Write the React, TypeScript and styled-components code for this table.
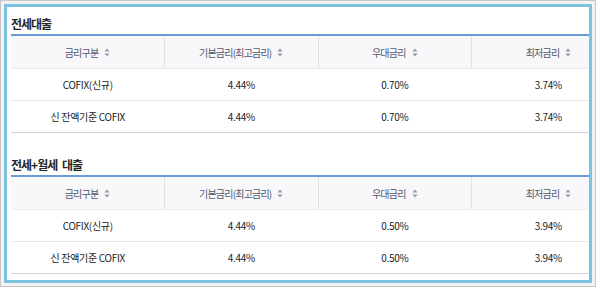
import styled, { createGlobalStyle } from "styled-components";

const GlobalStyle = createGlobalStyle`
  html, body {
    margin: 0;
    padding: 0;
    background: #fff;
  }
  body {
    font-family: "Noto Sans CJK KR", "Noto Sans", sans-serif;
  }
`;

interface RateRow {
  name: string;
  base: string;
  pref: string;
  min: string;
}

interface Section {
  title: string;
  rows: RateRow[];
}

const sections: Section[] = [
  {
    title: "전세대출",
    rows: [
      { name: "COFIX(신규)", base: "4.44%", pref: "0.70%", min: "3.74%" },
      { name: "신 잔액기준 COFIX", base: "4.44%", pref: "0.70%", min: "3.74%" },
    ],
  },
  {
    title: "전세+월세 대출",
    rows: [
      { name: "COFIX(신규)", base: "4.44%", pref: "0.50%", min: "3.94%" },
      { name: "신 잔액기준 COFIX", base: "4.44%", pref: "0.50%", min: "3.94%" },
    ],
  },
];

const headers = ["금리구분", "기본금리(최고금리)", "우대금리", "최저금리"];

const Frame = styled.div`
  box-sizing: border-box;
  width: 596px;
  height: 287px;
  border: 1px solid #c6c6c6;
  background: #f3f3f3;
  padding: 3px;
`;

const Panel = styled.div`
  box-sizing: border-box;
  height: 100%;
  border: 3px solid #7dc3e1;
  background: #fff;
  overflow: hidden;
  padding: 7px 0 0 4px;
`;

const Block = styled.section<{ $first?: boolean }>`
  margin-top: ${(p) => (p.$first ? "0" : "22px")};
`;

const Title = styled.h3`
  margin: 0;
  font-size: 12px;
  line-height: 20px;
  font-weight: 700;
  color: #262626;
  letter-spacing: -1px;
  word-spacing: 3px;
`;

const Table = styled.table`
  width: 614px;
  table-layout: fixed;
  border-collapse: collapse;
  border-top: 2px solid #6b9bd6;
`;

const HeadCell = styled.th`
  height: 32px;
  padding: 0;
  background: #f8f8fa;
  border-bottom: 1px solid #ececec;
  border-left: 1px solid #e2e2e6;
  font-size: 10px;
  font-weight: 400;
  color: #52576f;
  letter-spacing: -0.8px;
  text-align: center;

  &:first-child {
    border-left: none;
  }
`;

const Cell = styled.td<{ $last?: boolean }>`
  height: 31px;
  padding: 0;
  border-bottom: 1px solid ${(p) => (p.$last ? "#d2d2da" : "#e8e8e8")};
  font-size: 10px;
  letter-spacing: -0.3px;
  color: #222;
  text-align: center;
`;

const HeadLabel = styled.span`
  display: inline-flex;
  align-items: center;
  gap: 6px;
`;

const SortIcon = () => (
  <svg width="6" height="9" viewBox="0 0 6 9" aria-hidden="true">
    <path d="M3 0.5 L5.6 3.6 L0.4 3.6 Z" fill="#9a9ca8" />
    <path d="M3 8.5 L5.6 5.4 L0.4 5.4 Z" fill="#9a9ca8" />
  </svg>
);

function RateTable({ section, first }: { section: Section; first?: boolean }) {
  return (
    <Block $first={first}>
      <Title>{section.title}</Title>
      <Table>
        <thead>
          <tr>
            {headers.map((h) => (
              <HeadCell key={h}>
                <HeadLabel>
                  {h}
                  <SortIcon />
                </HeadLabel>
              </HeadCell>
            ))}
          </tr>
        </thead>
        <tbody>
          {section.rows.map((r, i) => {
            const last = i === section.rows.length - 1;
            return (
              <tr key={r.name}>
                <Cell $last={last}>{r.name}</Cell>
                <Cell $last={last}>{r.base}</Cell>
                <Cell $last={last}>{r.pref}</Cell>
                <Cell $last={last}>{r.min}</Cell>
              </tr>
            );
          })}
        </tbody>
      </Table>
    </Block>
  );
}

export default function App() {
  return (
    <>
      <GlobalStyle />
      <Frame>
        <Panel>
          {sections.map((s, i) => (
            <RateTable key={s.title} section={s} first={i === 0} />
          ))}
        </Panel>
      </Frame>
    </>
  );
}
